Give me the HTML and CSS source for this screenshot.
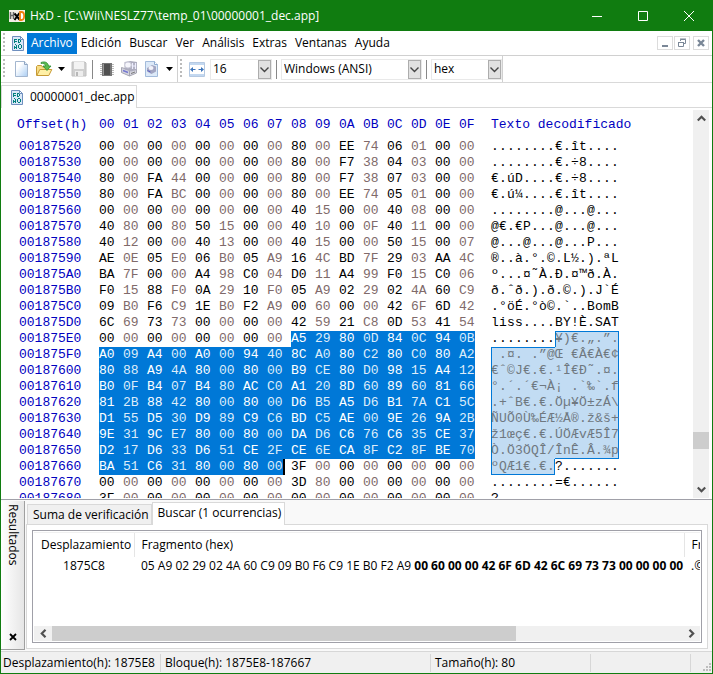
FILE: index.html
```
<!DOCTYPE html>
<html lang="es">

<head>
  <meta charset="UTF-8">
  <meta name="viewport" content="width=device-width, initial-scale=1.0">
  <title>HxD - [C:\Wii\NESLZ77\temp_01\00000001_dec.app]</title>
  <link rel="stylesheet" href="styles.css">
</head>

<body>
  <!-- icono de documento, se usa en el menu y en la pestaña -->
  <svg class="defs" width="0" height="0" aria-hidden="true">
    <symbol id="doc" viewBox="0 0 12 15">
      <path d="M.5.5h8l3 3v11H.5z" fill="#d9e8f8" stroke="#6f8fbe" />
      <path d="M8.500.5v3h3z" fill="#fff" stroke="#6f8fbe" />
      <path d="M2 3h3v1H3v1h2v1H3v1H2zM6 3h2v1h1v2H8v1H6zM7 4v2h1V4zM2 9h1v1H2zM3 8h1v1H3zM4 9h1v4H4v-1H3v1H2V9h1v2h1zM6 9h1V8h2v1h1v3H9v1H7v-1H6zM7 9v3h2V9z" fill="#007f7c" fill-rule="evenodd" />
    </symbol>
    <symbol id="chevron" viewBox="0 0 9 9">
      <path d="M.5 2.500l4 4 4-4" fill="none" stroke="currentColor" stroke-width="1.400" />
    </symbol>
    <symbol id="arrow" viewBox="0 0 9 9">
      <path d="M.8 2.500l3.700 3.700 3.700-3.700" fill="none" stroke="currentColor" stroke-width="2.200" />
    </symbol>
  </svg>

  <div class="window">
    <header class="titlebar">
      <svg class="logo" width="16" height="12" viewBox="0 0 16 12">
        <path d="M0 0h16v12H0z" fill="#f4efe6" />
        <path d="M1.500 2v7M4.500 2v7M1.500 5.500h3" stroke="#666" stroke-width="1.500" fill="none" />
        <path d="M5.500 3.500l5 6M10.500 3l-5 7" stroke="#000" stroke-width="2" fill="none" />
        <path d="M11 2h1.500c3.500 0 3.500 8 0 8H11z" stroke="#f08010" stroke-width="1.800" fill="#fff" />
      </svg>
      <h1>HxD - [C:\Wii\NESLZ77\temp_01\00000001_dec.app]</h1>
      <div class="win-buttons">
        <button aria-label="Minimizar"><svg width="12" height="12"><path d="M1 6.500h10" stroke="#fff" /></svg></button>
        <button aria-label="Maximizar"><svg width="12" height="12"><path d="M1.500 1.500h9v9h-9z" stroke="#fff" fill="none" /></svg></button>
        <button aria-label="Cerrar"><svg width="12" height="12"><path d="M1 1l10 10M11 1L1 11" stroke="#fff" /></svg></button>
      </div>
    </header>

    <nav class="menubar">
      <i class="grip"></i>
      <svg class="doc" width="12" height="15"><use href="#doc" /></svg>
      <button class="active">Archivo</button>
      <button>Edición</button>
      <button>Buscar</button>
      <button>Ver</button>
      <button>Análisis</button>
      <button>Extras</button>
      <button>Ventanas</button>
      <button>Ayuda</button>
      <div class="mdi-buttons">
        <button aria-label="Minimizar documento"><svg width="14" height="12"><path d="M4 9h6" stroke="#7a8797" stroke-width="2" /></svg></button>
        <button aria-label="Restaurar documento"><svg width="14" height="12"><path d="M5.500 4V2.500h5v4H9M5 2h6M3.500 5.500h5v4h-5zM3 5.500h6" stroke="#7a8797" fill="none" /></svg></button>
        <button aria-label="Cerrar documento" class="last"><svg width="14" height="12"><path d="M4 3l6 6M10 3L4 9" stroke="#7a8797" stroke-width="2.400" /></svg></button>
      </div>
    </nav>

    <div class="toolbar">
      <div class="group files">
        <i class="grip"></i>
        <button class="new" aria-label="Nuevo">
          <svg width="16" height="16" viewBox="0 0 16 16">
            <defs><linearGradient id="sheet" x1="0" y1="0" x2="1" y2="1"><stop offset=".3" stop-color="#fff" /><stop offset="1" stop-color="#a9cdf3" /></linearGradient></defs>
            <path d="M1.500.5h9l3 3v12h-12z" fill="url(#sheet)" stroke="#a3b6cf" />
            <path d="M10.500.5v3h3" fill="#e3eefa" stroke="#8fa5c2" />
          </svg>
        </button>
        <button class="open" aria-label="Abrir">
          <svg width="17" height="16" viewBox="0 0 17 16">
            <path d="M.5 14.500V5.500l1-1h4l1 1.500h6v3" fill="#f7dd86" stroke="#c79a35" />
            <path d="M.8 14.500l3-6h12l-3 6z" fill="#fff0a6" stroke="#c79a35" />
            <path d="M5 1.500c4-1.500 7 0 7.500 3.500h2.500l-4 4.500-4-4.500h2.500C9.300 3 7.500 2 5 2.500z" fill="#5dbb4c" stroke="#2b8b35" stroke-width=".8" />
          </svg>
        </button>
        <button class="drop" aria-label="Archivos recientes"><svg width="7" height="4"><path d="M0 0h7L3.500 4z" /></svg></button>
        <button class="save" aria-label="Guardar" disabled>
          <svg width="16" height="16" viewBox="0 0 16 16">
            <path d="M1 1h13l1 1v13H1z" fill="#cfcfcf" stroke="#c0c0c0" />
            <path d="M3 1h10v7H3z" fill="#f3f3f3" />
            <path d="M4 10h8v5H4z" fill="#ededed" />
            <path d="M5 11h2v4H5z" fill="#b8b8b8" />
          </svg>
        </button>
        <i class="sep"></i>
        <button class="chip" aria-label="Abrir RAM">
          <svg width="16" height="16" viewBox="0 0 16 16">
            <path d="M1 3.500h14M1 5.500h14M1 7.500h14M1 9.500h14M1 11.500h14M1 13.500h14" stroke="#bbb" />
            <path d="M3 2h10v13H3z" fill="#777" />
            <path d="M5 3h6v11H5z" fill="#505050" />
            <path d="M4 3h1v11H4z" fill="#999" />
          </svg>
        </button>
        <button class="disk" aria-label="Abrir disco">
          <svg width="17" height="16" viewBox="0 0 17 16">
            <path d="M.5 6.500l8 2.500v6L.5 11.500zM8.500 9l7-2v5l-7 3z" fill="#d5d5df" stroke="#a5a5b2" />
            <path d="M3.500 1l6-1 6.500 1v8l-6 1.500-6.500-2z" fill="#adadbf" />
            <ellipse cx="7" cy="4" rx="3.300" ry="3" fill="#f5f5fb" stroke="#c9c9d8" />
            <path d="M11.500 2v6M14.500 2v6M11.500 5h3" stroke="#eef" stroke-width="1.200" />
            <path d="M2 9.500l5 2" stroke="#7578d0" stroke-width="1.500" />
            <path d="M10 12.500l4-1.500" stroke="#777" />
          </svg>
        </button>
        <button class="image" aria-label="Abrir imagen de disco">
          <svg width="16" height="16" viewBox="0 0 16 16">
            <path d="M1.500.5h9l3 3v12h-12z" fill="#dce9f8" stroke="#a3bbdb" />
            <path d="M10.500.5v3h3" fill="#fff" stroke="#8fabd0" />
            <path d="M3 7l5-3 4 1.500v5L7.500 13 3 10.500z" fill="#a3a6c2" />
            <ellipse cx="7" cy="7" rx="2.500" ry="2" fill="#f3f3fa" />
            <path d="M3.500 9.500l3 1.500" stroke="#5a60c8" />
          </svg>
        </button>
        <button class="drop" aria-label="Más imágenes"><svg width="7" height="4"><path d="M0 0h7L3.500 4z" /></svg></button>
      </div>
      <div class="group view">
        <i class="grip"></i>
        <label class="width-icon" for="bytes" aria-label="Bytes por fila">
          <svg width="16" height="15" viewBox="0 0 16 15">
            <path d="M.5.500h15v14H.5z" fill="#fff" stroke="#b5c9e2" />
            <path d="M1 1h14v2H1zM1 12h14v2H1z" fill="#c3d8f0" />
            <path d="M3 7.500h3.500M9.500 7.500H13" stroke="#3b73b9" />
            <path d="M1 7.500L4 5v5zM15 7.500L12 5v5z" fill="#3b73b9" />
          </svg>
        </label>
        <div class="combo bytes">
          <select id="bytes"><option>16</option></select>
          <span><svg width="9" height="9"><use href="#chevron" /></svg></span>
        </div>
        <i class="sep"></i>
        <div class="combo charset">
          <select aria-label="Juego de caracteres"><option>Windows (ANSI)</option></select>
          <span><svg width="9" height="9"><use href="#chevron" /></svg></span>
        </div>
        <i class="sep"></i>
        <div class="combo base">
          <select aria-label="Base numérica"><option>hex</option></select>
          <span><svg width="9" height="9"><use href="#chevron" /></svg></span>
        </div>
      </div>
    </div>

    <div class="file-tabs">
      <button>
        <svg width="12" height="15"><use href="#doc" /></svg>
        00000001_dec.app
      </button>
    </div>

    <main class="editor">
      <div class="hex-view">
        <table class="hex">
          <thead>
            <tr id="head"></tr>
          </thead>
          <tbody id="rows"></tbody>
        </table>
      </div>
      <div class="scroll-v">
        <button aria-label="Subir"><svg class="up" width="9" height="9"><use href="#arrow" /></svg></button>
        <i class="before"></i>
        <i class="thumb"></i>
        <i class="after"></i>
        <button aria-label="Bajar"><svg width="9" height="9"><use href="#arrow" /></svg></button>
      </div>
    </main>

    <section class="results">
      <div class="dock">
        <span>Resultados</span>
        <button aria-label="Cerrar resultados"><svg width="8" height="8"><path d="M1 1l6 6M7 1L1 7" stroke="#000" stroke-width="1.800" /></svg></button>
      </div>
      <div class="panel">
        <div class="result-tabs">
          <button>Suma de verificación</button>
          <button class="active">Buscar (1 ocurrencias)</button>
        </div>
        <div class="page">
          <div class="list">
            <div class="list-view">
              <table>
                <thead>
                  <tr>
                    <th class="pos">Desplazamiento</th>
                    <th class="frag">Fragmento (hex)</th>
                    <th>Fragmento (texto)</th>
                  </tr>
                </thead>
                <tbody>
                  <tr>
                    <td class="pos">1875C8</td>
                    <td class="frag">05 A9 02 29 02 4A 60 C9 09 B0 F6 C9 1E B0 F2 A9 <b>00 60 00 00 42 6F 6D 42 6C 69 73 73 00 00 00 00</b></td>
                    <td>.©.).J`É.°öÉ.°ò©</td>
                  </tr>
                </tbody>
              </table>
            </div>
            <div class="scroll-h">
              <button aria-label="Izquierda"><svg class="left" width="9" height="9"><use href="#arrow" /></svg></button>
              <i class="thumb"></i>
              <i class="after"></i>
              <button aria-label="Derecha"><svg class="right" width="9" height="9"><use href="#arrow" /></svg></button>
            </div>
          </div>
        </div>
      </div>
    </section>

    <footer class="status">
      <span class="s1">Desplazamiento(h): 1875E8</span>
      <span class="s2">Bloque(h): 1875E8-187667</span>
      <span class="s3">Tamaño(h): 80</span>
      <span class="s4"></span>
      <svg width="10" height="10"><path d="M7 0h2v2H7zM4 3h2v2H4zM7 3h2v2H7zM1 6h2v2H1zM4 6h2v2H4zM7 6h2v2H7z" fill="#bdbdbd" /></svg>
    </footer>
  </div>

  <script src="script.js"></script>
</body>

</html>
```
FILE: styles.css
```
* {
  box-sizing: border-box;
}

body {
  margin: 0;
  font: 12px/16px "Open Sans", "Noto Sans", sans-serif;
  color: #000;
}

button,
select {
  font: inherit;
  color: inherit;
  background: none;
  border: none;
  padding: 0;
  margin: 0;
}

svg {
  display: block;
  flex: none;
}

.defs {
  position: absolute;
}

.window {
  height: 100vh;
  display: flex;
  flex-direction: column;
  border: 1px solid #107c10;
  background: #fff;
  overflow: hidden;
}

/* barra de titulo */
.titlebar {
  height: 30px;
  flex: none;
  display: flex;
  align-items: center;
  padding-left: 8px;
  background: #107c10;
  color: #fff;
}

.titlebar h1 {
  flex: 1;
  margin: 0 0 0 5px;
  font-size: 12px;
  font-weight: normal;
  white-space: nowrap;
}

.win-buttons {
  display: flex;
}

.win-buttons button {
  width: 46px;
  height: 29px;
  display: flex;
  align-items: center;
  justify-content: center;
}

/* menu */
.grip {
  width: 2px;
  height: 20px;
  flex: none;
  background: repeating-linear-gradient(#bbb 0 2px, #fff 2px 4px);
}

.menubar {
  height: 25px;
  flex: none;
  display: flex;
  align-items: center;
  padding-left: 2px;
  border-bottom: 1px solid #d0d0d0;
}

.menubar .doc {
  margin: 0 3px 0 7px;
}

.menubar > button {
  height: 21px;
  padding: 0 4px;
}

.menubar .active {
  background: #0078d7;
  color: #fff;
}

.mdi-buttons {
  margin-left: auto;
  margin-right: 3px;
  display: flex;
  gap: 1px;
}

.mdi-buttons button {
  border: 1px solid #dcdcdc;
}

.mdi-buttons .last {
  margin-left: 2px;
}

/* barra de herramientas */
.toolbar {
  height: 27px;
  flex: none;
  display: flex;
  border-bottom: 1px solid #d9d9d9;
}

.group {
  display: flex;
  align-items: center;
  padding-left: 2px;
  border-right: 1px solid #d0d0d0;
}

.sep {
  width: 1px;
  height: 19px;
  background: #888;
}

.new {
  margin-left: 9px;
}

.open {
  margin-left: 6px;
}

.drop {
  margin-left: 5px;
}

.save,
.chip,
.disk,
.image {
  margin-left: 6px;
}

.files .sep {
  margin-left: 5px;
}

.files .drop:last-child {
  margin: 0 4px 0 6px;
}

.width-icon {
  margin: 0 5px 0 7px;
}

.combo {
  display: grid;
  grid-template-columns: 1fr 13px;
  align-items: center;
  height: 21px;
  border: 1px solid #e9e9e9;
}

.combo select {
  grid-area: 1 / 1 / 2 / 3;
  appearance: none;
  height: 19px;
  padding-left: 2px;
  outline: none;
}

.combo span {
  grid-area: 1 / 2;
  height: 19px;
  display: flex;
  align-items: center;
  justify-content: center;
  background: #e1e1e1;
  border: 1px solid #adadad;
  color: #444;
  pointer-events: none;
}

.view .sep {
  margin: 0 4px;
}

.bytes {
  width: 62px;
}

.charset {
  width: 141px;
}

.base {
  width: 71px;
}

/* pestañas de ficheros */
.file-tabs {
  height: 25px;
  flex: none;
  padding-top: 2px;
  display: flex;
}

.file-tabs::after {
  content: "";
  flex: 1;
  border-bottom: 1px solid #d9d9d9;
}

.file-tabs button {
  display: flex;
  align-items: center;
  gap: 7px;
  padding: 0 2px 0 9px;
  border: 1px solid #d9d9d9;
  border-bottom: none;
}

/* editor */
.editor {
  flex: 1;
  min-height: 0;
  display: flex;
  padding: 2px 3px 1px 0;
  border-bottom: 1px solid #a0a0a8;
}

.hex-view {
  flex: 1;
  min-width: 0;
  overflow: hidden;
  padding: 5px 0 0 16px;
}

.hex {
  border-collapse: collapse;
  table-layout: fixed;
  font: 13px/16px "Liberation Mono", monospace;
}

.hex th,
.hex td {
  height: 16px;
  padding: 0;
  text-align: left;
  font-weight: normal;
  white-space: nowrap;
}

.hex thead th {
  height: 24px;
  padding-bottom: 4px;
  color: #0000bf;
}

.hex tbody th {
  padding-left: 2px;
  color: #0000bf;
}

.hex .offset {
  width: 82px;
}

.hex .byte {
  width: 24px;
}

.hex .byte:nth-last-child(2) {
  width: 16px;
}

.hex td.byte:nth-child(odd) {
  color: #806a6a;
}

.hex td.byte.sel {
  background: #0078d7;
  color: #fff;
}

.hex td.byte.sel:nth-child(odd) {
  color: #dcecfa;
}

/* la seleccion acaba justo detras del ultimo byte, con el cursor */
.hex td.byte.end {
  background: linear-gradient(90deg, #0078d7 16px, #000 16px 18px, #fff 18px);
}

.hex .text {
  padding-left: 16px;
}

.hex td.text span {
  --t: inset 0 0 transparent;
  --r: inset 0 0 transparent;
  --b: inset 0 0 transparent;
  --l: inset 0 0 transparent;
  float: left;
  width: 8px;
  height: 16px;
  white-space: pre;
}

.hex td.text .sel {
  background: #c2dcf3;
  color: #6f7880;
  box-shadow: var(--t), var(--r), var(--b), var(--l);
}

.hex .text .edge-top {
  --t: inset 0 1px #0078d7;
}

.hex .text .edge-right {
  --r: inset -1px 0 #0078d7;
}

.hex .text .edge-bottom {
  --b: inset 0 -1px #0078d7;
}

.hex .text .edge-left {
  --l: inset 1px 0 #0078d7;
}

/* barras de desplazamiento */
.scroll-v,
.scroll-h {
  flex: none;
  display: flex;
  background: #f0f0f0;
  color: #505050;
}

.scroll-v {
  width: 16px;
  flex-direction: column;
}

.scroll-h {
  height: 15px;
}

.scroll-v button,
.scroll-h button {
  flex: none;
  display: flex;
  align-items: center;
  justify-content: center;
}

.scroll-v button {
  height: 17px;
}

.scroll-h button {
  width: 18px;
}

.thumb {
  background: #cdcdcd;
}

.scroll-v .thumb {
  height: 17px;
}

.scroll-v .before {
  flex: 19;
}

.scroll-v .after {
  flex: 2;
}

.scroll-h .thumb {
  flex: 14;
}

.scroll-h .after {
  flex: 5;
}

.up {
  transform: rotate(180deg);
}

.left {
  transform: rotate(90deg);
}

.right {
  transform: rotate(-90deg);
}

/* resultados */
.results {
  flex: none;
  display: flex;
  background: #f9f9f9;
}

.dock {
  width: 24px;
  margin: 1px 0;
  padding: 3px 0 8px;
  display: flex;
  flex-direction: column;
  align-items: center;
  justify-content: space-between;
  background: linear-gradient(90deg, #fff, #e6e6e6);
  border-right: 1px solid #a0a0a0;
  border-bottom: 1px solid #a0a0a0;
}

.dock span {
  writing-mode: vertical-rl;
}

.panel {
  flex: 1;
  min-width: 0;
  padding: 2px 4px 2px 1px;
}

.result-tabs {
  display: flex;
  align-items: flex-end;
  padding-left: 1px;
}

.result-tabs button {
  height: 20px;
  padding: 0 2px 0 5px;
  background: #f0f0f0;
  border: 1px solid #d9d9d9;
  border-bottom: none;
}

/* tapa la linea superior de la pagina */
.result-tabs .active {
  position: relative;
  height: 23px;
  margin-bottom: -1px;
  padding: 0 3px 3px 5px;
  background: #fff;
}

.page {
  padding: 5px;
  background: #fff;
  border: 1px solid #d9d9d9;
}

.list {
  padding: 1px;
  border: 1px solid #a0a0a8;
}

.list-view {
  height: 94px;
  overflow: hidden;
  border-top: 1px solid #f0f0f0;
}

.list table {
  width: 650px;
  border-collapse: collapse;
  table-layout: fixed;
}

.list th,
.list td {
  padding: 0 7px;
  text-align: left;
  font-weight: normal;
  white-space: nowrap;
}

.list th {
  height: 24px;
}

.list td {
  height: 17px;
}

.list th + th {
  border-left: 1px solid #e5e5e5;
}

.list .pos {
  width: 100px;
}

.list .frag {
  width: 550px;
}

.list td.pos {
  text-align: center;
}

/* barra de estado */
.status {
  height: 22px;
  flex: none;
  display: flex;
  align-items: center;
  background: #f0f0f0;
  border-top: 1px solid #d7d7d7;
}

.status span {
  height: 18px;
  padding: 1px 0 0 4px;
  white-space: nowrap;
  border-right: 1px solid #d7d7d7;
}

.status .s1 {
  width: 160px;
  padding-left: 2px;
}

.status .s2 {
  width: 270px;
}

.status .s3 {
  width: 160px;
}

.status .s4 {
  width: 100px;
}

.status svg {
  margin-left: auto;
  align-self: flex-end;
}
```
FILE: script.js
```
const head = document.querySelector('#head')
const rows = document.querySelector('#rows')

const start = 0x187520
const selStart = 0x1875E8
const selEnd = 0x187667

const dump = `
00 00 00 00 00 00 00 00 80 00 EE 74 06 01 00 00
00 00 00 00 00 00 00 00 80 00 F7 38 04 03 00 00
80 00 FA 44 00 00 00 00 80 00 F7 38 07 03 00 00
80 00 FA BC 00 00 00 00 80 00 EE 74 05 01 00 00
00 00 00 00 00 00 00 00 40 15 00 00 40 08 00 00
40 80 00 80 50 15 00 00 40 10 00 0F 40 11 00 00
40 12 00 00 40 13 00 00 40 15 00 00 50 15 00 07
AE 0E 05 E0 06 B0 05 A9 16 4C BD 7F 29 03 AA 4C
BA 7F 00 00 A4 98 C0 04 D0 11 A4 99 F0 15 C0 06
F0 15 88 F0 0A 29 10 F0 05 A9 02 29 02 4A 60 C9
09 B0 F6 C9 1E B0 F2 A9 00 60 00 00 42 6F 6D 42
6C 69 73 73 00 00 00 00 42 59 21 C8 0D 53 41 54
00 00 00 00 00 00 00 00 A5 29 80 0D 84 0C 94 0B
A0 09 A4 00 A0 00 94 40 8C A0 80 C2 80 C0 80 A2
80 88 A9 4A 80 00 80 00 B9 CE 80 D0 98 15 A4 12
B0 0F B4 07 B4 80 AC C0 A1 20 8D 60 89 60 81 66
81 2B 88 42 80 00 80 00 D6 B5 A5 D6 B1 7A C1 5C
D1 55 D5 30 D9 89 C9 C6 BD C5 AE 00 9E 26 9A 2B
9E 31 9C E7 80 00 80 00 DA D6 C6 76 C6 35 CE 37
D2 17 D6 33 D6 51 CE 2F CE 6E CA 8F C2 8F BE 70
BA 51 C6 31 80 00 80 00 3F 00 00 00 00 00 00 00
00 00 00 00 00 00 00 00 3D 80 00 00 00 00 00 00
3F 00 00 00 00 00 00 00 00 00 00 00 00 00 00 00
`.trim().split('\n').map(line => line.split(' '))

const hex = (n, len) => n.toString(16).toUpperCase().padStart(len, '0')
const inSel = pos => pos >= selStart && pos <= selEnd

// bytes a texto ANSI, los caracteres de control se muestran como punto
const decoder = new TextDecoder('windows-1252')
function decode(byte) {
  const ch = decoder.decode(new Uint8Array([parseInt(byte, 16)]))
  return /[\x00-\x1f\x7f-\x9f]/.test(ch) ? '.' : ch
}

function addCell(tr, tag, className, text) {
  const cell = document.createElement(tag)
  cell.className = className
  cell.textContent = text
  tr.append(cell)
  return cell
}

// cabecera
addCell(head, 'th', 'offset', 'Offset(h)')
for (let i = 0; i < 16; i++) {
  addCell(head, 'th', 'byte', hex(i, 2))
}
addCell(head, 'th', 'text', 'Texto decodificado')

dump.forEach((bytes, r) => {
  const tr = document.createElement('tr')
  const base = start + r * 16
  addCell(tr, 'th', 'offset', hex(base, 8))

  bytes.forEach((byte, i) => {
    const cell = addCell(tr, 'td', 'byte', byte)
    if (inSel(base + i)) cell.classList.add('sel')
    if (base + i === selEnd) cell.classList.add('end')
  })

  const text = addCell(tr, 'td', 'text', '')
  bytes.forEach((byte, i) => {
    const pos = base + i
    const ch = addCell(text, 'span', '', decode(byte))
    if (!inSel(pos)) return
    ch.classList.add('sel')
    // borde solo donde termina la seleccion
    if (!inSel(pos - 16)) ch.classList.add('edge-top')
    if (!inSel(pos + 16)) ch.classList.add('edge-bottom')
    if (i === 0 || !inSel(pos - 1)) ch.classList.add('edge-left')
    if (i === 15 || !inSel(pos + 1)) ch.classList.add('edge-right')
  })

  rows.append(tr)
})
```
